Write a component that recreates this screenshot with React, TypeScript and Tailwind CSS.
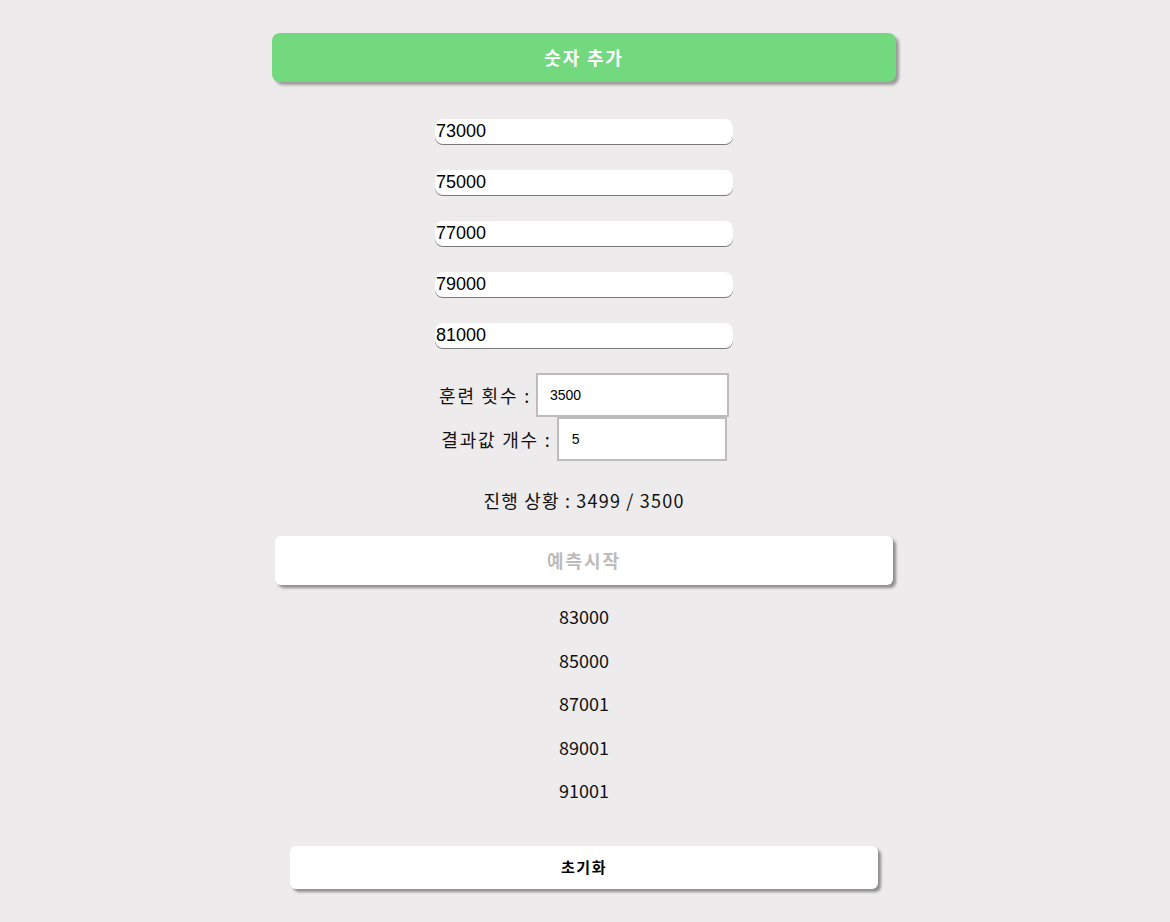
import React, { useState } from 'react';

const KR = { fontFamily: '"Malgun Gothic", "Noto Sans CJK KR", "Liberation Sans", sans-serif' };
const AR = { fontFamily: '"Liberation Sans", Arial, "Noto Sans CJK KR", sans-serif' };

const App: React.FC = () => {
  const [values, setValues] = useState<string[]>(['73000', '75000', '77000', '79000', '81000']);
  const [epochs, setEpochs] = useState('3500');
  const [count, setCount] = useState('5');
  const results = ['83000', '85000', '87001', '89001', '91001'];

  const update = (i: number, v: string) => {
    const next = [...values];
    next[i] = v;
    setValues(next);
  };

  return (
    <div className="min-h-[922px] w-full bg-[#edebec] flex flex-col items-center pt-[33px] pb-[33px] pr-[2px]" style={KR}>
      <button
        onClick={() => setValues([...values, ''])}
        className="w-[624px] h-[49px] rounded-lg bg-[#72d97f] text-white text-[18px] font-bold tracking-[1.8px] shadow-[3px_3px_3px_rgba(0,0,0,0.35)]"
      >
        숫자 추가
      </button>

      <div className="flex flex-col items-center gap-[26px] mt-[37px]">
        {values.map((v, i) => (
          <input
            key={i}
            value={v}
            onChange={(e) => update(i, e.target.value)}
            className="w-[298px] h-[25px] rounded-lg bg-white px-[1px] text-[18px] text-black outline-none shadow-[0_1px_0_#7a7a7a]"
            style={AR}
          />
        ))}
      </div>

      <div className="flex flex-col items-center mt-[25px] text-[18px] text-[#111] tracking-[1.8px]">
        <div className="flex items-center">
          <span className="mr-[5px]">훈련 횟수 :</span>
          <input
            value={epochs}
            onChange={(e) => setEpochs(e.target.value)}
            className="w-[193px] h-[44px] border-2 border-[#bdbbbc] bg-white pl-[12px] text-[14px] tracking-normal text-black outline-none"
            style={AR}
          />
        </div>
        <div className="flex items-center">
          <span className="mr-[5px]">결과값 개수 :</span>
          <input
            value={count}
            onChange={(e) => setCount(e.target.value)}
            className="w-[170px] h-[44px] border-2 border-[#bdbbbc] bg-white pl-[13px] text-[14px] tracking-normal text-black outline-none"
            style={AR}
          />
        </div>
      </div>

      <p className="mt-[26px] text-[18px] leading-[27px] tracking-[1.2px] text-[#111]">진행 상황 : 3499 / 3500</p>

      <button
        disabled
        className="mt-[22px] w-[618px] h-[49px] rounded-md bg-white text-[#bdbbbc] text-[18px] font-bold tracking-[2px] shadow-[3px_3px_3px_rgba(0,0,0,0.4)]"
      >
        예측시작
      </button>

      <div className="flex flex-col items-center mt-[18px] gap-[16.5px]">
        {results.map((r) => (
          <p key={r} className="text-[18px] leading-[27px] text-[#111]">
            {r}
          </p>
        ))}
      </div>

      <button
        onClick={() => setValues([])}
        className="mt-[42px] w-[588px] h-[43px] rounded-md bg-white text-black text-[15px] font-bold tracking-[1.5px] shadow-[3px_3px_3px_rgba(0,0,0,0.4)]"
      >
        초기화
      </button>
    </div>
  );
};

export default App;
